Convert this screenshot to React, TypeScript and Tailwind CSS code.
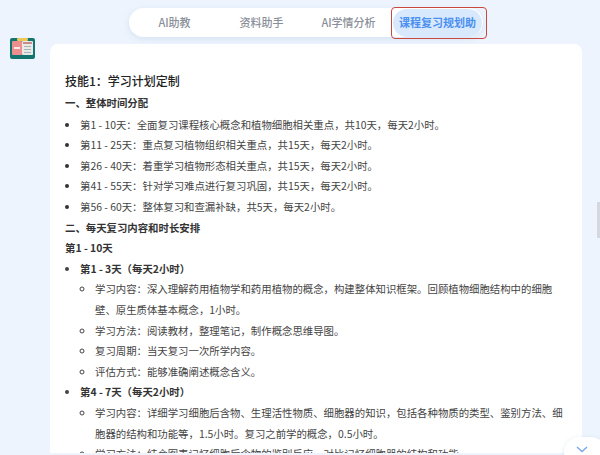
const tabs = ["AI助教", "资料助手", "AI学情分析"];

const overview = [
    "第1 - 10天：全面复习课程核心概念和植物细胞相关重点，共10天，每天2小时。",
    "第11 - 25天：重点复习植物组织相关重点，共15天，每天2小时。",
    "第26 - 40天：着重学习植物形态相关重点，共15天，每天2小时。",
    "第41 - 55天：针对学习难点进行复习巩固，共15天，每天2小时。",
    "第56 - 60天：整体复习和查漏补缺，共5天，每天2小时。",
];

const firstBlock = [
    "学习内容：深入理解药用植物学和药用植物的概念，构建整体知识框架。回顾植物细胞结构中的细胞壁、原生质体基本概念，1小时。",
    "学习方法：阅读教材，整理笔记，制作概念思维导图。",
    "复习周期：当天复习一次所学内容。",
    "评估方式：能够准确阐述概念含义。",
];

const secondBlock = [
    "学习内容：详细学习细胞后含物、生理活性物质、细胞器的知识，包括各种物质的类型、鉴别方法、细胞器的结构和功能等，1.5小时。复习之前学的概念，0.5小时。",
    "学习方法：结合图表记忆细胞后含物的鉴别反应，对比记忆细胞器的结构和功能。",
];

function Logo() {
    return (
        <svg width="25" height="21" viewBox="0 0 25 21" className="shrink-0">
            <rect width="25" height="21" rx="2" fill="#14746f" />
            <rect x="7" y="0" width="11" height="3" rx="1" fill="#e8c85a" />
            <rect x="2" y="3" width="10" height="14" rx="1" fill="#ee8f8f" />
            <rect x="4" y="9" width="6" height="2" fill="#fbeaea" />
            <rect x="12" y="3" width="11" height="14" rx="1" fill="#e9e9e6" />
            <rect x="13" y="4" width="9" height="2" fill="#c98a8a" />
            <rect x="14" y="8" width="7" height="1" fill="#a9b4b8" />
            <rect x="14" y="11" width="7" height="1" fill="#a9b4b8" />
            <rect x="14" y="14" width="7" height="1" fill="#a9b4b8" />
        </svg>
    );
}

function App() {
    return (
        <div
            className="relative h-[455px] w-[600px] overflow-hidden bg-[#edf4fd] text-[10.4px] text-[#444]"
            style={{ fontFamily: '"Noto Sans CJK SC", "Noto Sans", sans-serif' }}
        >
            <div className="flex pt-[8px] pl-[129px]">
                <div className="flex h-[29px] w-[354px] items-center rounded-full bg-white pl-[2px] shadow-[0_2px_6px_rgba(170,195,230,0.35)]">
                    {tabs.map(tab => (
                        <span key={tab} className="w-[87px] shrink-0 text-center text-[11px] font-medium text-[#8a8f99]">
                            {tab}
                        </span>
                    ))}
                    <span className="ml-[-1px] flex h-[32px] w-[96px] shrink-0 items-center rounded-[4px] border border-[#c9483f] pl-[1px]">
                        <span className="flex h-[28px] w-[89px] items-center justify-center rounded-full bg-[#d9e9fd] text-[11px] font-semibold whitespace-nowrap text-[#4a90f0]">
                            课程复习规划助
                        </span>
                    </span>
                </div>
            </div>

            <div className="mt-[7px] flex pl-[10px]">
                <div className="mt-[-6px] w-[40px]">
                    <Logo />
                </div>
                <div className="h-[420px] w-[532px] rounded-t-[8px] bg-white pt-[27px] pr-[15px] pl-[15px] leading-[20.6px]">
                    <h2 className="mb-[2px] text-[12px] leading-[20px] font-medium text-[#222]">技能1：学习计划定制</h2>
                    <p className="font-semibold text-[#333]">一、整体时间分配</p>
                    <ul className="mt-[1px] list-disc pl-[15px] marker:text-[#333]">
                        {overview.map(line => (
                            <li key={line}>{line}</li>
                        ))}
                    </ul>
                    <p className="font-semibold text-[#333]">二、每天复习内容和时长安排</p>
                    <p className="font-semibold text-[#333]">第1 - 10天</p>
                    <ul className="list-disc pl-[15px]">
                        <li>
                            <span className="font-semibold text-[#333]">第1 - 3天（每天2小时）</span>
                            <ul className="list-[circle] pl-[15px]">
                                {firstBlock.map(line => (
                                    <li key={line}>{line}</li>
                                ))}
                            </ul>
                        </li>
                        <li>
                            <span className="font-semibold text-[#333]">第4 - 7天（每天2小时）</span>
                            <ul className="list-[circle] pl-[15px]">
                                {secondBlock.map(line => (
                                    <li key={line}>{line}</li>
                                ))}
                            </ul>
                        </li>
                    </ul>
                </div>
            </div>

            {/* bottom fade, scrollbar and scroll-down button sit over the card */}
            <div className="absolute inset-x-0 bottom-0 h-[2px] bg-[#edf4fd]" />
            <div className="absolute top-[202px] right-0 h-[36px] w-[3px] bg-[#d5d8de]" />
            <div className="absolute top-[437px] right-[-6px] flex h-[30px] w-[42px] justify-center rounded-full bg-white pt-[9px] pr-[6px] shadow-[0_1px_4px_rgba(170,195,230,0.4)]">
                <svg width="12" height="7" viewBox="0 0 12 7" fill="none" stroke="#7aa7e8" strokeWidth="1.4">
                    <path d="M1 1 L6 5.5 L11 1" />
                </svg>
            </div>
        </div>
    );
}

export default App;
